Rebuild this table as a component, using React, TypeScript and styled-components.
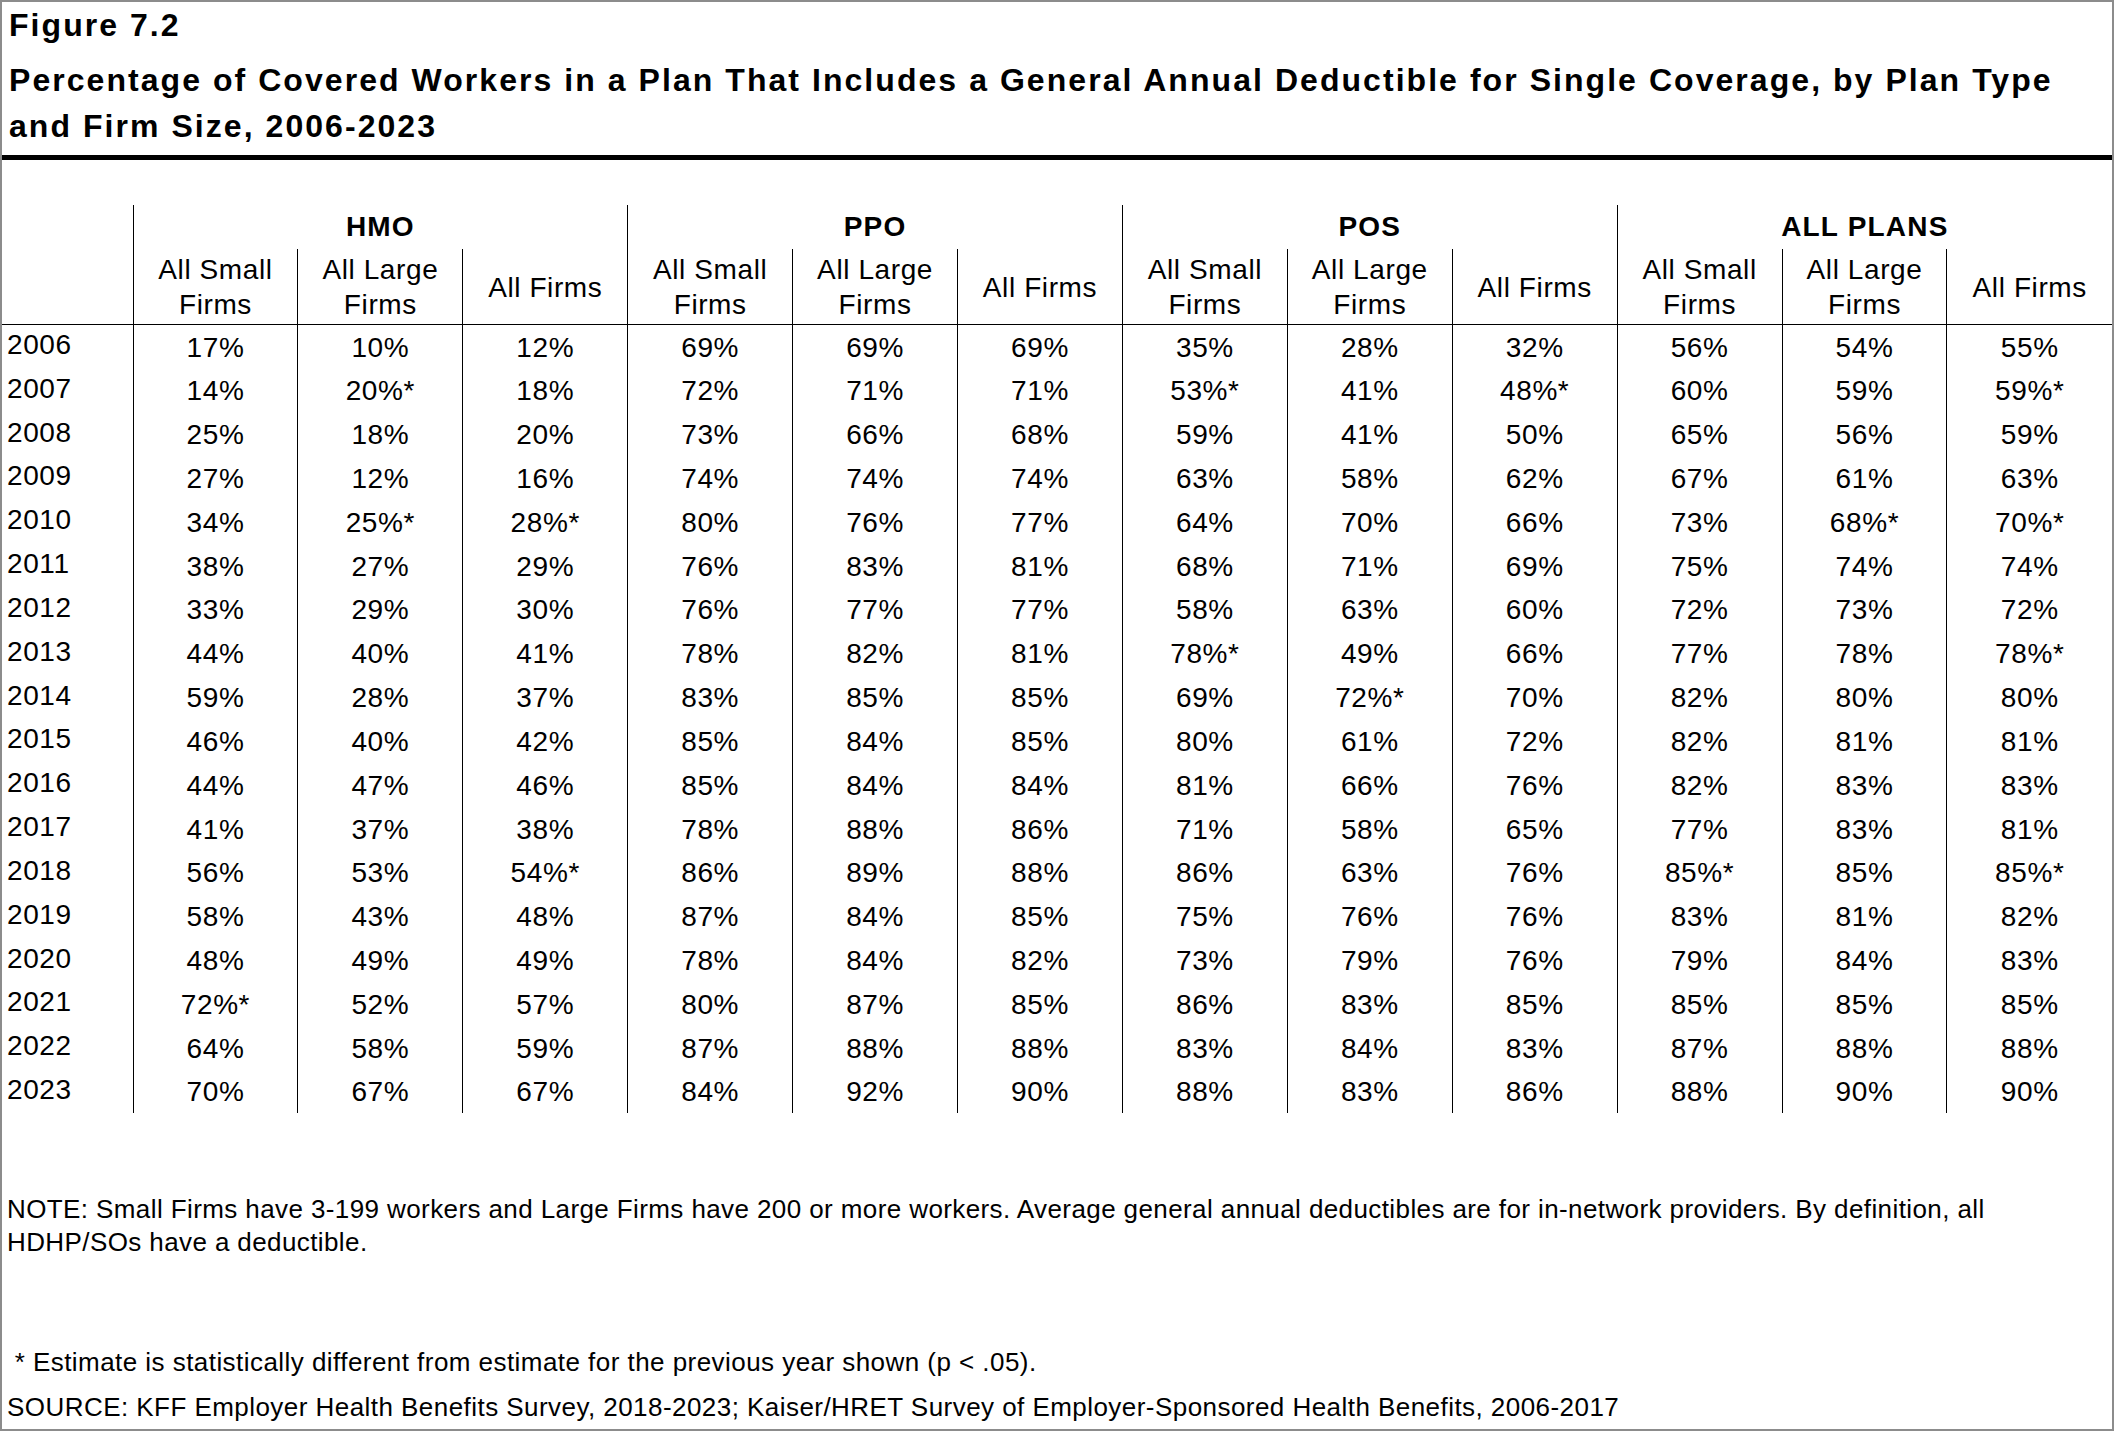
import React from "react";
import styled, { createGlobalStyle } from "styled-components";

const GlobalStyle = createGlobalStyle`
  html, body {
    margin: 0;
    padding: 0;
    background: #ffffff;
  }
  body {
    font-family: "Liberation Sans", Arial, sans-serif;
    color: #000000;
  }
`;

const Figure = styled.div`
  width: 2114px;
  height: 1431px;
  box-sizing: border-box;
  border: 2px solid #8c8c8c;
  background: #ffffff;
  overflow: hidden;
`;

const Heading = styled.div`
  padding: 3px 40px 0 7px;
  font-weight: 700;
  font-size: 32px;
  letter-spacing: 2.05px;
`;

const FigureLabel = styled.div`
  line-height: 40px;
`;

const Title = styled.div`
  margin-top: 12px;
  line-height: 46px;
`;

const Rule = styled.div`
  margin-top: 6px;
  height: 5px;
  background: #000000;
`;

const Table = styled.table`
  margin-top: 45px;
  width: 100%;
  table-layout: fixed;
  border-collapse: collapse;
  font-size: 28px;
  letter-spacing: 0.6px;
`;

const YearCol = styled.col`
  width: 131px;
`;

const GroupCell = styled.th`
  height: 44px;
  padding: 0;
  line-height: 44px;
  font-weight: 700;
  letter-spacing: 1.2px;
  text-align: center;
  border-left: 1px solid #000000;
`;

const CornerCell = styled.th`
  padding: 0;
  border-bottom: 1px solid #000000;
`;

const SubCell = styled.th`
  height: 75px;
  padding: 2px 4px 0;
  box-sizing: border-box;
  line-height: 35px;
  font-weight: 400;
  text-align: center;
  vertical-align: middle;
  border-left: 1px solid #000000;
  border-bottom: 1px solid #000000;
`;

const Row = styled.tr`
  height: 43.83px;
`;

const YearCell = styled.td`
  padding: 0 0 2px 5px;
  line-height: 40px;
  text-align: left;
  white-space: nowrap;
`;

const ValueCell = styled.td`
  padding: 3px 0 0;
  line-height: 40px;
  text-align: center;
  white-space: nowrap;
  border-left: 1px solid #000000;
`;

const Notes = styled.div`
  margin-top: 80px;
  padding: 0 60px 0 5px;
  font-size: 26px;
  letter-spacing: 0.4px;
  line-height: 33px;
`;

const Footer = styled.div`
  margin-top: 81px;
  padding: 0 8px 0 5px;
  font-size: 26px;
  letter-spacing: 0.45px;
  line-height: 45px;
  white-space: pre;
`;

const groups = ["HMO", "PPO", "POS", "ALL PLANS"];

const subHeads = [
  ["All Small", "Firms"],
  ["All Large", "Firms"],
  ["All Firms"],
];

const rows: [string, string][] = [
  ["2006", "17% 10% 12% 69% 69% 69% 35% 28% 32% 56% 54% 55%"],
  ["2007", "14% 20%* 18% 72% 71% 71% 53%* 41% 48%* 60% 59% 59%*"],
  ["2008", "25% 18% 20% 73% 66% 68% 59% 41% 50% 65% 56% 59%"],
  ["2009", "27% 12% 16% 74% 74% 74% 63% 58% 62% 67% 61% 63%"],
  ["2010", "34% 25%* 28%* 80% 76% 77% 64% 70% 66% 73% 68%* 70%*"],
  ["2011", "38% 27% 29% 76% 83% 81% 68% 71% 69% 75% 74% 74%"],
  ["2012", "33% 29% 30% 76% 77% 77% 58% 63% 60% 72% 73% 72%"],
  ["2013", "44% 40% 41% 78% 82% 81% 78%* 49% 66% 77% 78% 78%*"],
  ["2014", "59% 28% 37% 83% 85% 85% 69% 72%* 70% 82% 80% 80%"],
  ["2015", "46% 40% 42% 85% 84% 85% 80% 61% 72% 82% 81% 81%"],
  ["2016", "44% 47% 46% 85% 84% 84% 81% 66% 76% 82% 83% 83%"],
  ["2017", "41% 37% 38% 78% 88% 86% 71% 58% 65% 77% 83% 81%"],
  ["2018", "56% 53% 54%* 86% 89% 88% 86% 63% 76% 85%* 85% 85%*"],
  ["2019", "58% 43% 48% 87% 84% 85% 75% 76% 76% 83% 81% 82%"],
  ["2020", "48% 49% 49% 78% 84% 82% 73% 79% 76% 79% 84% 83%"],
  ["2021", "72%* 52% 57% 80% 87% 85% 86% 83% 85% 85% 85% 85%"],
  ["2022", "64% 58% 59% 87% 88% 88% 83% 84% 83% 87% 88% 88%"],
  ["2023", "70% 67% 67% 84% 92% 90% 88% 83% 86% 88% 90% 90%"],
];

export default function App() {
  return (
    <>
      <GlobalStyle />
      <Figure>
        <Heading>
          <FigureLabel>Figure 7.2</FigureLabel>
          <Title>
            Percentage of Covered Workers in a Plan That Includes a General Annual Deductible for
            Single Coverage, by Plan Type and Firm Size, 2006-2023
          </Title>
        </Heading>
        <Rule />
        <Table>
          <colgroup>
            <YearCol />
            {Array.from({ length: 12 }).map((_, i) => (
              <col key={i} />
            ))}
          </colgroup>
          <thead>
            <tr>
              <CornerCell rowSpan={2} />
              {groups.map((g) => (
                <GroupCell key={g} colSpan={3}>
                  {g}
                </GroupCell>
              ))}
            </tr>
            <tr>
              {groups.map((g) =>
                subHeads.map((lines, i) => (
                  <SubCell key={g + i}>
                    {lines.map((l, j) => (
                      <React.Fragment key={j}>
                        {j > 0 && <br />}
                        {l}
                      </React.Fragment>
                    ))}
                  </SubCell>
                ))
              )}
            </tr>
          </thead>
          <tbody>
            {rows.map(([year, values]) => (
              <Row key={year}>
                <YearCell>{year}</YearCell>
                {values.split(" ").map((v, i) => (
                  <ValueCell key={i}>{v}</ValueCell>
                ))}
              </Row>
            ))}
          </tbody>
        </Table>
        <Notes>
          NOTE: Small Firms have 3-199 workers and Large Firms have 200 or more workers. Average
          general annual deductibles are for in-network providers. By definition, all HDHP/SOs have
          a deductible.
        </Notes>
        <Footer>
          {" * Estimate is statistically different from estimate for the previous year shown (p < .05)."}
          {"\n"}
          SOURCE: KFF Employer Health Benefits Survey, 2018-2023; Kaiser/HRET Survey of
          Employer-Sponsored Health Benefits, 2006-2017
        </Footer>
      </Figure>
    </>
  );
}
